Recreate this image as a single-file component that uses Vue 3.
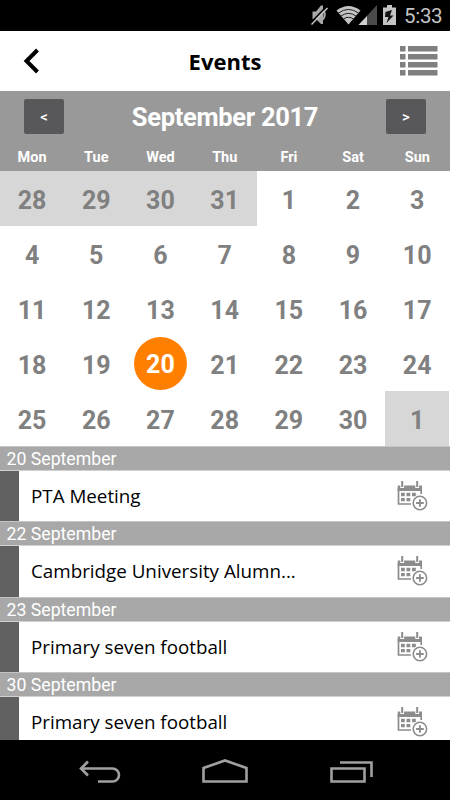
<template>
  <div class="screen">
    <div class="status-bar">
      <svg class="status-icons" width="100" height="31" viewBox="0 0 100 31">
        <!-- muted speaker -->
        <path d="M12.500 11.500h3.500l5-6h2v18.500h-2l-5-5h-3.500z" fill="#a8a8a8" />
        <path d="M23 9.500q3.500 5 0 10" fill="none" stroke="#a8a8a8" stroke-width="2" />
        <path d="M10 23.500L25.500 7.500" stroke="#000" stroke-width="1.500" />
        <path d="M11.500 24.500L27.500 8" stroke="#c4c4c4" stroke-width="1.500" />
        <!-- wifi -->
        <path d="M36.500 10.600Q48.500 1.500 60.500 10.600L48.500 24.500z" fill="#c4c4c4" />
        <path d="M38.500 13Q48.500 5.800 58.500 13M41 16Q48.500 10.700 56 16M43.500 19Q48.500 15.500 53.500 19" fill="none" stroke="#222" stroke-width="1" />
        <!-- signal -->
        <path d="M58.500 25L77 5v20z" fill="#4a4a4a" />
        <path d="M58.500 25L67 16v9z" fill="#d0d0d0" />
        <!-- battery -->
        <path d="M83 7.500h4V5h5v2.500h4V25H83z" fill="#c4c4c4" />
        <path d="M92 10L85.500 12l-.5 5h3.500l-2 6L93.500 15.500h-3.500z" fill="#111" />
      </svg>
      <span class="clock">5:33</span>
    </div>

    <header class="title-bar">
      <button class="icon-btn back">
        <svg width="18" height="26" viewBox="0 0 18 26">
          <path d="M15.500 2L4.500 13L15.500 24" fill="none" stroke="#000" stroke-width="4" />
        </svg>
      </button>
      <h1>Events</h1>
      <button class="icon-btn menu">
        <svg width="38" height="30" viewBox="0 0 38 30">
          <g v-for="n in 4" :key="n" fill="#7f7f7f">
            <rect x="0" :y="(n - 1) * 8" width="5.500" height="5.500" />
            <rect x="8" :y="(n - 1) * 8" width="29.500" height="5.500" />
          </g>
        </svg>
      </button>
    </header>

    <section class="calendar">
      <div class="calendar-head">
        <div class="month-row">
          <button class="month-btn">&lt;</button>
          <span class="month">September 2017</span>
          <button class="month-btn">&gt;</button>
        </div>
        <div class="weekdays">
          <span v-for="day in weekdays" :key="day">{{ day }}</span>
        </div>
      </div>
      <div class="days">
        <div
          v-for="(day, index) in days"
          :key="index"
          class="day"
          :class="{ outside: day.outside, selected: isSelected(day) }"
          @click="selectDay(day)"
        >
          <span>{{ day.date }}</span>
        </div>
      </div>
    </section>

    <main class="events">
      <div v-for="event in events" :key="event.date" class="event-group">
        <div class="event-date">{{ event.date }}</div>
        <div class="event">
          <span class="marker"></span>
          <span class="event-title">{{ event.title }}</span>
          <svg class="add-icon" width="32" height="32" viewBox="0 0 32 32">
            <path d="M1.700 5.500h24.300v5.500h-24.300z" fill="#8c8c8c" />
            <path d="M2.500 8v16H15M25.200 8v6" fill="none" stroke="#8c8c8c" stroke-width="1.700" />
            <path d="M6.200 2v6M21.200 2v6" stroke="#fff" stroke-width="3.800" />
            <path d="M6.200 1v6M21.200 1v6" stroke="#8c8c8c" stroke-width="2" />
            <path d="M5 12.700h3.800v3.500H5zM10.500 12.700h3.800v3.500h-3.800zM16 12.700h3.800v3.500h-3.800zM5 18h3.800v3.300H5zM10.500 18h3.800v3.300h-3.800z" fill="#8c8c8c" />
            <circle cx="23.900" cy="23" r="8" fill="#fff" />
            <circle cx="23.900" cy="23" r="6.700" fill="none" stroke="#8c8c8c" stroke-width="1.600" />
            <path d="M23.900 19.200v7.600M20.100 23h7.600" stroke="#8c8c8c" stroke-width="1.800" />
          </svg>
        </div>
      </div>
    </main>

    <nav class="nav-bar">
      <svg width="450" height="60" viewBox="0 0 450 60" fill="none" stroke="#a0a0a0" stroke-width="2.600">
        <path d="M98 41.500h14.500a6.500 6.500 0 0 0 0-13H82" />
        <path d="M88 21.500L81 28.500L88 35.500" />
        <path d="M203.500 41.500V28L225 20.500L246.500 28v13.500z" />
        <path d="M331.500 28.500h33v13h-33z" />
        <path d="M340 22.500h31.500V37" />
      </svg>
    </nav>
  </div>
</template>

<script setup>
import { ref } from 'vue';

const weekdays = ['Mon', 'Tue', 'Wed', 'Thu', 'Fri', 'Sat', 'Sun'];

const days = [
  ...[28, 29, 30, 31].map((date) => ({ date, outside: true })),
  ...Array.from({ length: 30 }, (_, i) => ({ date: i + 1, outside: false })),
  { date: 1, outside: true }
];

const events = [
  { date: '20 September', title: 'PTA Meeting' },
  { date: '22 September', title: 'Cambridge University Alumn...' },
  { date: '23 September', title: 'Primary seven football' },
  { date: '30 September', title: 'Primary seven football' }
];

const selected = ref(20);

const isSelected = (day) => !day.outside && day.date === selected.value;

const selectDay = (day) => {
  if (!day.outside) {
    selected.value = day.date;
  }
};
</script>

<style>
body {
  margin: 0;
  background: #000;
}
</style>

<style scoped>
.screen {
  display: flex;
  flex-direction: column;
  width: 450px;
  height: 800px;
  overflow: hidden;
  background: #fff;
  font-family: Roboto, sans-serif;
}

button {
  padding: 0;
  border: none;
  cursor: pointer;
}

svg {
  display: block;
}

.status-bar {
  display: flex;
  justify-content: flex-end;
  align-items: center;
  flex: none;
  height: 31px;
  padding-right: 8px;
  box-sizing: border-box;
  background: #000;
}

.status-icons {
  margin-right: 4px;
}

.clock {
  width: 38px;
  padding-top: 2px;
  color: #c4c4c4;
  font-size: 20.5px;
  letter-spacing: -0.3px;
  line-height: 29px;
  white-space: nowrap;
}

.title-bar {
  display: flex;
  justify-content: space-between;
  align-items: center;
  flex: none;
  height: 60px;
  padding: 0 12px 0 22px;
  box-sizing: border-box;
}

.icon-btn {
  display: flex;
  width: 40px;
  background: none;
}

.menu {
  justify-content: flex-end;
}

h1 {
  margin: 0 0 0 -10px;
  font-family: 'Open Sans', sans-serif;
  font-size: 22px;
  font-weight: 700;
}

.calendar-head {
  height: 80px;
  background: #999;
  color: #fff;
}

.month-row {
  display: flex;
  justify-content: space-between;
  align-items: center;
  height: 51px;
  padding: 0 24px;
}

.month-btn {
  width: 40px;
  height: 35px;
  border-radius: 2px;
  background: #58585a;
  color: #fff;
  font-family: Roboto, sans-serif;
  font-size: 15px;
  font-weight: 500;
}

.month {
  font-size: 25.5px;
  font-weight: 700;
  letter-spacing: -0.3px;
}

.weekdays {
  display: grid;
  grid-template-columns: repeat(7, 1fr);
  width: 449.5px;
  height: 29px;
  font-size: 14.5px;
  font-weight: 700;
  line-height: 31px;
  text-align: center;
}

.days {
  display: grid;
  grid-template-columns: repeat(7, 1fr);
  grid-auto-rows: 55px;
  width: 449.3px;
}

.day {
  display: flex;
  justify-content: center;
  align-items: center;
  color: #808080;
  font-size: 25px;
  font-weight: 700;
}

.day span {
  padding-top: 3px;
}

.outside {
  background: #d7d7d7;
}

.selected span {
  width: 53px;
  height: 53px;
  padding-top: 0;
  border-radius: 50%;
  background: #ff8000;
  color: #fff;
  line-height: 55px;
  text-align: center;
}

.events {
  flex: 1;
  min-height: 0;
  overflow: hidden;
}

.event-date {
  height: 25px;
  padding-left: 6.5px;
  box-sizing: border-box;
  border-top: 1px solid #c4c4c4;
  border-bottom: 1px solid #d0d0d0;
  background: #a8a8a8;
  color: #fff;
  font-size: 17.7px;
  line-height: 25px;
}

.event {
  display: flex;
  align-items: center;
  height: 50.3px;
  padding-right: 22px;
}

.marker {
  width: 19px;
  height: 100%;
  background: #616161;
}

.event-title {
  flex: 1;
  padding-left: 12px;
  font-family: 'Open Sans', sans-serif;
  font-size: 18.8px;
}

.nav-bar {
  flex: none;
  height: 60px;
  background: #000;
}
</style>
